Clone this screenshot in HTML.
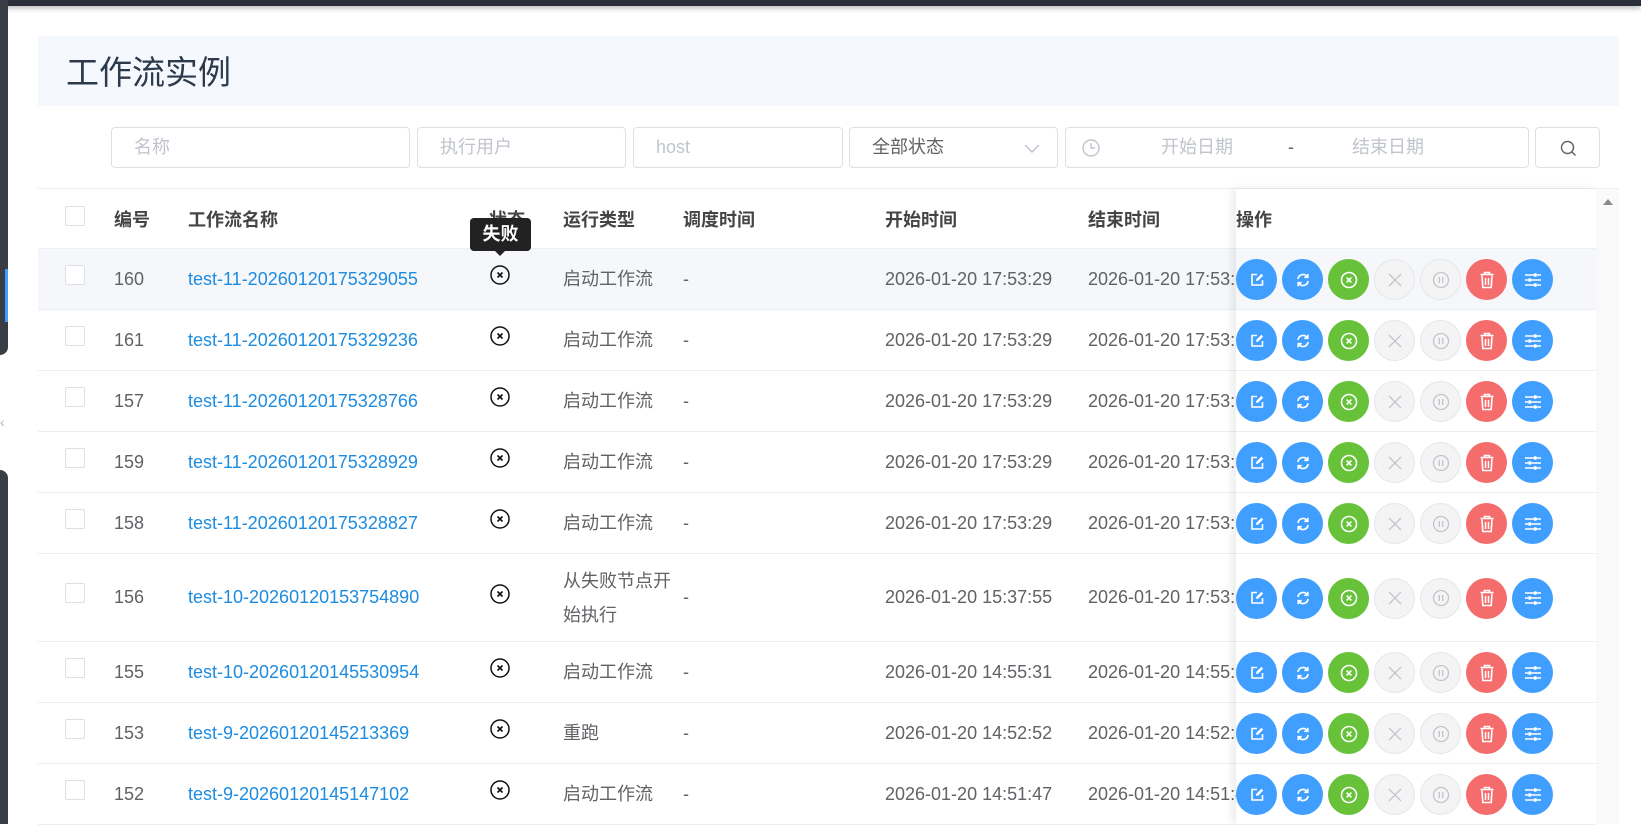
<!DOCTYPE html>
<html><head><meta charset="utf-8"><style>
*{box-sizing:border-box;margin:0;padding:0}
body{width:1641px;height:824px;overflow:hidden;background:#fff;font-family:"Liberation Sans","Noto Sans CJK SC",sans-serif;position:relative;color:#606266;font-size:18px}
.abs{position:absolute}
.inp{position:absolute;top:127px;height:41px;border:1px solid #dcdfe6;border-radius:4px;background:#fff;color:#c0c4cc;font-size:18px;line-height:39px;padding-left:22px}
.row{position:absolute;left:38px;width:1558px;border-bottom:1px solid #ebeef5}
.cell{position:absolute;top:0;height:100%;display:flex;align-items:center;font-size:18px;color:#606266;white-space:nowrap}
.cb{position:absolute;left:27px;width:20px;height:20px;border:1px solid #dcdfe6;border-radius:2px;background:#fff}
.btn{position:absolute;width:41px;height:41px;border-radius:50%;display:flex;align-items:center;justify-content:center}
.b{background:#409eff}.g{background:#67c23a}.r{background:#f56c6c}.d{background:#f4f4f5;border:1px solid #e4e7ed}
.hd{font-weight:bold;color:#444;font-size:18px}
</style></head><body>
<div class="abs" style="left:0;top:0;width:1641px;height:6px;background:#2b2f3a;box-shadow:0 2px 6px rgba(0,0,0,.3)"></div>
<div class="abs" style="left:0;top:0;width:8px;height:355px;background:#3a3d45;border-bottom-right-radius:8px"></div>
<div class="abs" style="left:5px;top:269px;width:3px;height:53px;background:#409eff"></div>
<div class="abs" style="left:0;top:470px;width:8px;height:354px;background:#3a3d45;border-top-right-radius:8px"></div>
<div class="abs" style="left:0;top:414px;color:#a0b4d0;font-size:14px">‹</div>

<div class="abs" style="left:38px;top:36px;width:1581px;height:70px;background:#f5f9fd"></div>
<div class="abs" style="left:66px;top:53px;font-size:33px;color:#2d3a4b;line-height:40px">工作流实例</div>

<div class="inp" style="left:111px;width:299px">名称</div>
<div class="inp" style="left:417px;width:209px">执行用户</div>
<div class="inp" style="left:633px;width:210px">host</div>
<div class="inp" style="left:849px;width:209px;color:#606266">全部状态
<svg class="abs" style="right:16px;top:14px" width="18" height="12" viewBox="0 0 18 12"><path d="M2 3l7 7 7-7" fill="none" stroke="#c0c4cc" stroke-width="1.4"/></svg></div>
<div class="inp" style="left:1065px;width:464px;padding-left:0">
<svg class="abs" style="left:16px;top:11px" width="18" height="18" viewBox="0 0 18 18"><circle cx="9" cy="9" r="8" fill="none" stroke="#c0c4cc" stroke-width="1.4"/><path d="M9 4v5h4" fill="none" stroke="#c0c4cc" stroke-width="1.4"/></svg>
<span class="abs" style="left:95px">开始日期</span><span class="abs" style="left:222px;color:#606266">-</span><span class="abs" style="left:286px">结束日期</span></div>
<div class="inp" style="left:1535px;width:65px;padding:0">
<svg class="abs" style="left:24px;top:12px" width="17" height="17" viewBox="0 0 17 17"><circle cx="7.5" cy="7.5" r="6" fill="none" stroke="#606266" stroke-width="1.4"/><path d="M12 12l3.5 3.5" stroke="#606266" stroke-width="1.4"/></svg></div>

<div class="abs" style="left:38px;top:188px;width:1581px;height:1px;background:#ebeef5"></div>
<div class="abs" style="left:1596px;top:189px;width:23px;height:635px;background:#fafafa"></div>
<svg class="abs" style="left:1602px;top:197px" width="12" height="9"><path d="M1 8L6 2l5 6z" fill="#8a8a8a"/></svg>

<div class="row" style="top:189px;height:60px">
<div class="cb" style="top:17px"></div>
<div class="cell hd" style="left:76px">编号</div>
<div class="cell hd" style="left:150px">工作流名称</div>
<div class="cell hd" style="left:451px">状态</div>
<div class="cell hd" style="left:525px">运行类型</div>
<div class="cell hd" style="left:645px">调度时间</div>
<div class="cell hd" style="left:847px">开始时间</div>
<div class="cell hd" style="left:1050px">结束时间</div>
</div>

<div id="rows"></div>

<div class="abs" style="left:1236px;top:189px;width:360px;height:635px;background:#fff;box-shadow:-4px 0 8px rgba(0,0,0,.08)" id="fix">
<div class="abs hd" style="left:0;top:0;height:60px;width:360px;display:flex;align-items:center;border-bottom:1px solid #ebeef5">操作</div>
</div>

<div class="abs" style="left:470px;top:218px;width:61px;height:33px;background:#222;border-radius:4px;color:#fff;font-size:18px;font-weight:bold;text-align:center;line-height:33px">失败</div>
<div class="abs" style="left:494px;top:250px;width:0;height:0;border-left:6px solid transparent;border-right:6px solid transparent;border-top:6px solid #222"></div>

<script>
var data=[
["160","test-11-20260120175329055","启动工作流","2026-01-20 17:53:29",61,1],
["161","test-11-20260120175329236","启动工作流","2026-01-20 17:53:29",61,0],
["157","test-11-20260120175328766","启动工作流","2026-01-20 17:53:29",61,0],
["159","test-11-20260120175328929","启动工作流","2026-01-20 17:53:29",61,0],
["158","test-11-20260120175328827","启动工作流","2026-01-20 17:53:29",61,0],
["156","test-10-20260120153754890","从失败节点开<br>始执行","2026-01-20 15:37:55",88,0],
["155","test-10-20260120145530954","启动工作流","2026-01-20 14:55:31",61,0],
["153","test-9-20260120145213369","重跑","2026-01-20 14:52:52",61,0],
["152","test-9-20260120145147102","启动工作流","2026-01-20 14:51:47",61,0]];
var ends=["17:53:29","17:53:29","17:53:29","17:53:29","17:53:29","17:53:29","14:55:31","14:52:52","14:51:47"];
var y=249,h="",f="";
var ic=[
'<svg width="16" height="16" viewBox="0 0 16 16"><path d="M8 2.5H3v10.5h10.5V8" fill="none" stroke="#fff" stroke-width="1.6"/><path d="M7 9l.4-2.2 5-5 1.8 1.8-5 5z" fill="#fff"/></svg>',
'<svg width="16" height="16" viewBox="0 0 16 16"><path d="M3 7a5 5 0 0 1 9-2.5M13 9a5 5 0 0 1-9 2.5" fill="none" stroke="#fff" stroke-width="1.7"/><path d="M12.8 1.8v3.5H9.3M3.2 14.2v-3.5h3.5" fill="none" stroke="#fff" stroke-width="1.6"/></svg>',
'<svg width="18" height="18" viewBox="0 0 18 18"><circle cx="9" cy="9" r="7.5" fill="none" stroke="#fff" stroke-width="1.6"/><path d="M6.6 6.6l4.8 4.8M11.4 6.6l-4.8 4.8" stroke="#fff" stroke-width="1.6"/></svg>',
'<svg width="16" height="16" viewBox="0 0 16 16"><path d="M2 2l12 12M14 2L2 14" stroke="#c0c4cc" stroke-width="1.3"/></svg>',
'<svg width="18" height="18" viewBox="0 0 18 18"><circle cx="9" cy="9" r="7.5" fill="none" stroke="#c0c4cc" stroke-width="1.3"/><path d="M7.3 6v6M10.7 6v6" stroke="#c0c4cc" stroke-width="1.3"/></svg>',
'<svg width="16" height="18" viewBox="0 0 16 18"><path d="M1.5 3.5h13M5.5 3.5V1.5h5v2" fill="none" stroke="#fff" stroke-width="1.6"/><path d="M3 4.5l.8 12h8.4l.8-12" fill="none" stroke="#fff" stroke-width="1.6"/><path d="M6.5 7v7M9.5 7v7" stroke="#fff" stroke-width="1.5"/></svg>',
'<svg width="18" height="16" viewBox="0 0 18 16"><path d="M1 3h16M1 8h16M1 13h16" stroke="#fff" stroke-width="1.5"/><rect x="10" y="1.3" width="2.5" height="3.4" fill="#fff"/><rect x="4.5" y="6.3" width="2.5" height="3.4" fill="#fff"/><rect x="10" y="11.3" width="2.5" height="3.4" fill="#fff"/></svg>'];
var cls=["b","b","g","d","d","r","b"];
data.forEach(function(d,i){
 var bg=d[5]?"#f5f7fa":"#fff";
 h+='<div class="row" style="top:'+y+'px;height:'+d[4]+'px;background:'+bg+'">'+
 '<div class="cb" style="top:'+(d[4]==88?29:16)+'px"></div>'+
 '<div class="cell" style="left:76px">'+d[0]+'</div>'+
 '<div class="cell" style="left:150px;color:#1d8ce0">'+d[1]+'</div>'+
 '<div class="cell" style="left:452px"><svg width="20" height="20" viewBox="0 0 20 20" style="margin-top:-8px"><circle cx="10" cy="10" r="9" fill="none" stroke="#111" stroke-width="1.5"/><path d="M7.5 7.5l5 5M12.5 7.5l-5 5" stroke="#111" stroke-width="1.6"/></svg></div>'+
 '<div class="cell" style="left:525px;line-height:34px;white-space:normal;width:112px">'+d[2]+'</div>'+
 '<div class="cell" style="left:645px">-</div>'+
 '<div class="cell" style="left:847px">'+d[3]+'</div>'+
 '<div class="cell" style="left:1050px">2026-01-20 '+ends[i]+'</div></div>';
 var top=y-189,fb='<div class="abs" style="left:0;top:'+top+'px;width:360px;height:'+d[4]+'px;background:'+bg+';border-bottom:1px solid #ebeef5">';
 for(var k=0;k<7;k++){fb+='<div class="btn '+cls[k]+'" style="left:'+(k*46)+'px;top:'+((d[4]-41)/2)+'px">'+ic[k]+'</div>';}
 f+=fb+'</div>';
 y+=d[4];
});
document.getElementById('rows').outerHTML=h;
document.getElementById('fix').insertAdjacentHTML('beforeend',f);
</script>
</body></html>
